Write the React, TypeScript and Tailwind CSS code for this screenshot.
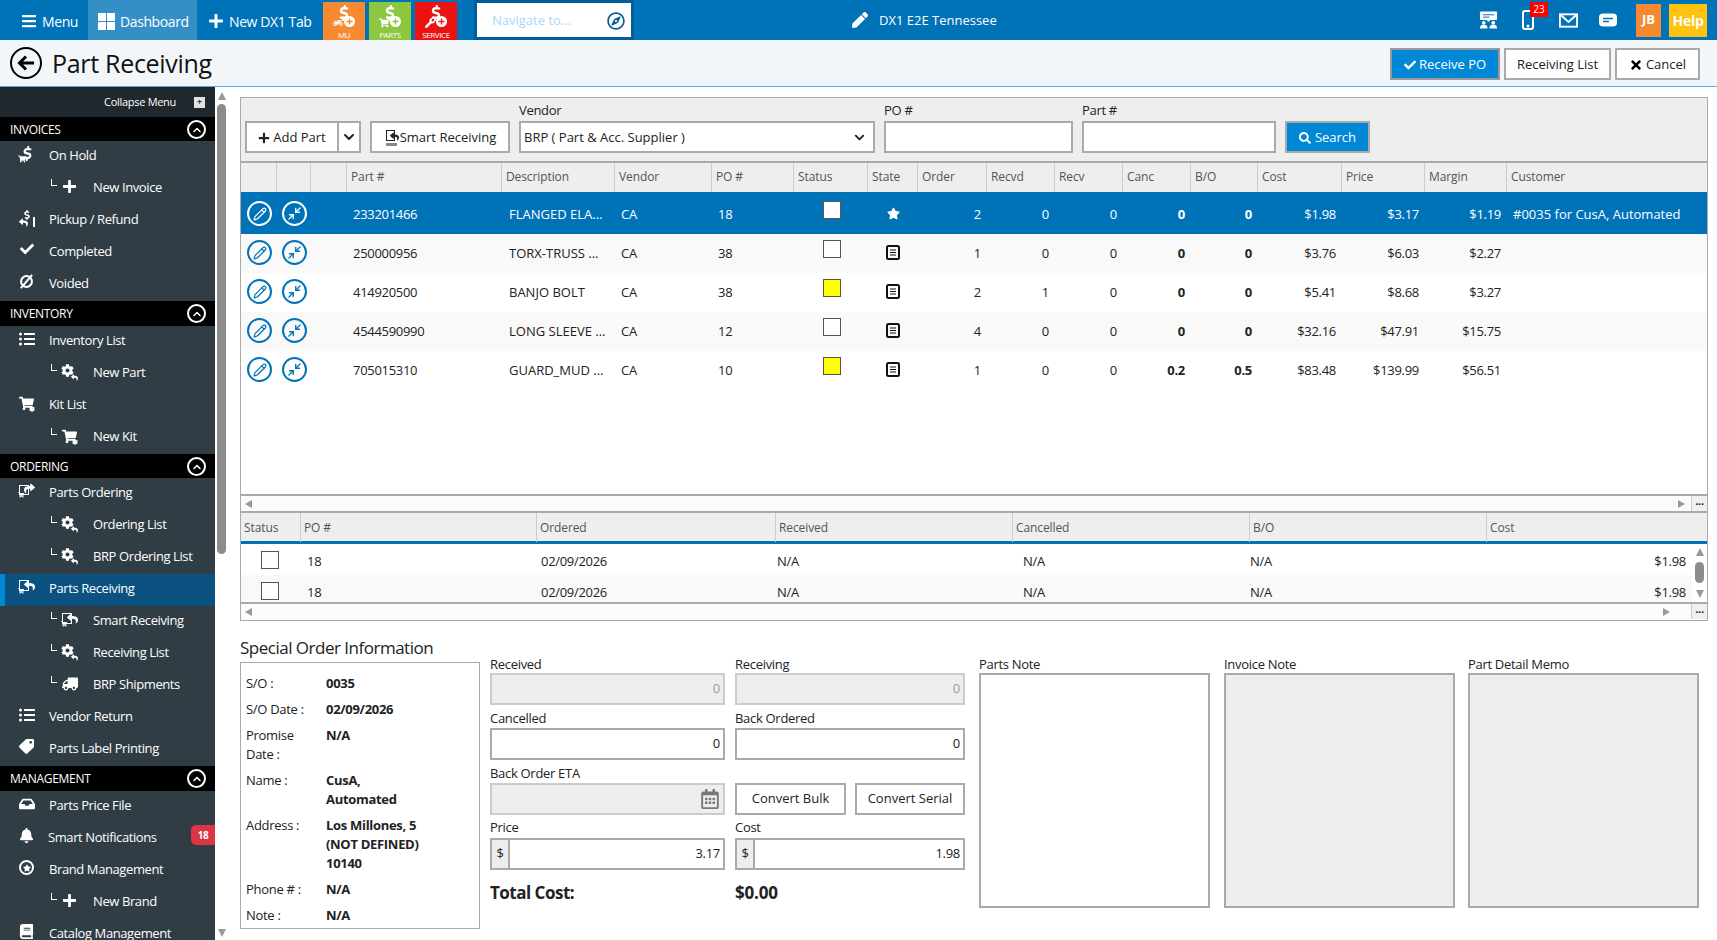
import { ReactNode } from "react"
import { ChevronDown, ChevronUp, Minimize2, Pencil } from "lucide-react"
import {
  FaBars, FaBell, FaBook, FaCheck, FaCog, FaDollarSign, FaListUl, FaPlus, FaRegCalendarAlt, FaRegCompass,
  FaReply, FaSearch, FaShare, FaShoppingCart, FaStar, FaTag, FaTimes, FaTruck, FaInbox, FaPen, FaWrench, FaMotorcycle,
} from "react-icons/fa"

const DollarCart = () => (
  <span className="relative block w-[17px] h-[17px]">
    <FaDollarSign className="absolute right-0 top-0 size-[15px] -skew-x-6" />
    <FaShoppingCart className="absolute left-0 bottom-0 size-[8px]" />
  </span>
)

const Refund = () => (
  <span className="relative block w-[16px] h-[17px]">
    <FaDollarSign className="absolute right-[3px] top-0 size-[10px]" />
    <FaReply className="absolute left-0 bottom-0 size-[9px]" />
    <span className="absolute right-0 bottom-0 w-[2px] h-[10px] bg-white" />
  </span>
)

const Voided = () => (
  <svg viewBox="0 0 16 16" className="size-[15px]" fill="none" stroke="currentColor" strokeWidth="2.2">
    <circle cx="8" cy="8" r="5.8" />
    <path d="M2 15 14 1" />
  </svg>
)

const Gear = () => (
  <span className="relative block w-[17px] h-[17px]">
    <FaCog className="absolute left-0 top-0 size-[13px]" />
    <FaReply className="absolute right-0 bottom-0 size-[7px]" />
  </span>
)

const CartBox = () => (
  <span className="relative block w-[16px] h-[17px]">
    <FaShoppingCart className="absolute left-0 top-[1px] size-[15px]" />
    <FaCog className="absolute right-0 bottom-0 size-[6px]" />
  </span>
)

const Ordering = () => (
  <span className="relative block w-[17px] h-[15px]">
    <span className="absolute left-[1px] top-[2px] w-[10px] h-[10px] border border-white" />
    <FaShare className="absolute right-0 top-0 size-[11px]" />
    <FaShoppingCart className="absolute left-0 bottom-0 size-[6px]" />
  </span>
)

const Receiving = () => (
  <span className="relative block w-[17px] h-[15px]">
    <span className="absolute left-[1px] top-[1px] w-[10px] h-[11px] border border-white" />
    <FaReply className="absolute right-0 top-[1px] size-[11px]" />
    <FaShoppingCart className="absolute left-0 bottom-0 size-[6px]" />
  </span>
)

const BrandRing = () => (
  <span className="flex items-center justify-center size-[15px] rounded-full border-2 border-white">
    <FaStar className="size-[8px]" />
  </span>
)

const CircleChevron = () => (
  <span className="flex items-center justify-center size-[19px] rounded-full border-2 border-white">
    <ChevronUp className="size-[12px]" strokeWidth={3} />
  </span>
)

type NavItem = { label: string; icon: ReactNode; sub?: boolean; active?: boolean; badge?: string; tight?: boolean }

const sections: { title: string; h: string; items: NavItem[] }[] = [
  {
    title: "INVOICES",
    h: "h-[24px] pt-[1px]",
    items: [
      { label: "On Hold", icon: <DollarCart /> },
      { label: "New Invoice", icon: <FaPlus className="size-[15px]" />, sub: true },
      { label: "Pickup / Refund", icon: <Refund /> },
      { label: "Completed", icon: <FaCheck className="size-[14px]" /> },
      { label: "Voided", icon: <Voided /> },
    ],
  },
  {
    title: "INVENTORY",
    h: "h-[25px]",
    items: [
      { label: "Inventory List", icon: <FaListUl className="size-[16px]" /> },
      { label: "New Part", icon: <Gear />, sub: true },
      { label: "Kit List", icon: <CartBox /> },
      { label: "New Kit", icon: <CartBox />, sub: true },
    ],
  },
  {
    title: "ORDERING",
    h: "h-[24px] pt-[1px]",
    items: [
      { label: "Parts Ordering", icon: <Ordering /> },
      { label: "Ordering List", icon: <Gear />, sub: true },
      { label: "BRP Ordering List", icon: <Gear />, sub: true },
      { label: "Parts Receiving", icon: <Receiving />, active: true },
      { label: "Smart Receiving", icon: <Receiving />, sub: true },
      { label: "Receiving List", icon: <Gear />, sub: true },
      { label: "BRP Shipments", icon: <FaTruck className="size-[16px] -scale-x-100" />, sub: true },
      { label: "Vendor Return", icon: <FaListUl className="size-[16px]" /> },
      { label: "Parts Label Printing", icon: <FaTag className="size-[15px] -scale-x-100" /> },
    ],
  },
  {
    title: "MANAGEMENT",
    h: "h-[25px]",
    items: [
      { label: "Parts Price File", icon: <FaInbox className="size-[16px]" /> },
      { label: "Smart Notifications", icon: <FaBell className="size-[15px]" />, badge: "18", tight: true },
      { label: "Brand Management", icon: <BrandRing /> },
      { label: "New Brand", icon: <FaPlus className="size-[15px]" />, sub: true },
      { label: "Catalog Management", icon: <FaBook className="size-[15px]" /> },
    ],
  },
]

function SideRow({ item }: { item: NavItem }) {
  const base = "flex items-start h-[32px] pt-[4px] text-[13px] leading-[20px] tracking-[-0.4px] text-white shrink-0"
  if (item.sub) {
    return (
      <div className={`${base} pl-[51px]`}>
        <span className="mt-[2px] w-[6px] h-[7px] border-l border-b border-white shrink-0" />
        <span className="ml-[4px] w-[17px] mt-[2px] flex justify-center shrink-0">{item.icon}</span>
        <span className="ml-[15px]">{item.label}</span>
      </div>
    )
  }
  return (
    <div className={`${base} ${item.active ? "bg-[#0c5280] border-l-[5px] border-[#0088d6] pl-[13px]" : "pl-[18px]"}`}>
      <span className="w-[17px] mt-[1px] flex justify-center shrink-0">{item.icon}</span>
      <span className={item.tight ? "ml-[13px]" : "ml-[14px]"}>{item.label}</span>
      {item.badge && (
        <span className="ml-auto w-[24px] h-[20px] mt-[-2px] rounded-l-[5px] bg-[#dc3545] text-[10px] font-bold flex items-center justify-center">
          {item.badge}
        </span>
      )}
    </div>
  )
}

function Sidebar() {
  return (
    <aside className="w-[215px] shrink-0 h-full overflow-hidden bg-[#303d45] flex flex-col">
      <div className="h-[30px] shrink-0 bg-[#20282e] flex items-center justify-end pr-[10px] text-white text-[11px]">
        <span>Collapse Menu</span>
        <span className="ml-[18px] w-[11px] h-[11px] bg-[#dfe3e6] flex items-center justify-center text-[#20282e] text-[8px] font-bold">+</span>
      </div>
      {sections.map((s) => (
        <div key={s.title} className="flex flex-col shrink-0">
          <div className={`${s.h} bg-black text-white text-[12px] pl-[10px] pr-[9px] flex items-center justify-between`}>
            <span>{s.title}</span>
            <CircleChevron />
          </div>
          {s.items.map((it) => <SideRow key={it.label} item={it} />)}
        </div>
      ))}
    </aside>
  )
}

const Triangle = ({ dir, className }: { dir: "up" | "down" | "left" | "right"; className?: string }) => {
  const pts = { up: "5,1 9,9 1,9", down: "1,1 9,1 5,9", left: "9,1 9,9 2,5", right: "1,1 1,9 8,5" }[dir]
  return (
    <svg viewBox="0 0 10 10" className={`size-[10px] shrink-0 ${className ?? ""}`} fill="#999">
      <polygon points={pts} />
    </svg>
  )
}

function HScroll({ rightPad }: { rightPad: string }) {
  return (
    <div className="h-[15px] shrink-0 bg-[#fbfbfb] flex items-center">
      <Triangle dir="left" className="ml-[2px]" />
      <div className="flex-1" />
      <Triangle dir="right" className={rightPad} />
      <div className="w-[16px] h-full bg-[#f0f0f0] border-l border-[#ccc] flex items-center justify-center text-[#222] text-[11px] font-bold leading-none pb-[6px]">...</div>
    </div>
  )
}

const partCols = "grid grid-cols-[36px_34px_36px_155px_113px_97px_82px_74px_50px_69px_68px_68px_68px_67px_84px_83px_82px_200px]"
const partHeads = ["", "", "", "Part #", "Description", "Vendor", "PO #", "Status", "State", "Order", "Recvd", "Recv", "Canc", "B/O", "Cost", "Price", "Margin", "Customer"]

const parts = [
  { no: "233201466", desc: "FLANGED ELA...", po: "18", box: "white", star: true, order: "2", recvd: "0", canc: "0", bo: "0", cost: "$1.98", price: "$3.17", margin: "$1.19", cust: "#0035 for CusA, Automated" },
  { no: "250000956", desc: "TORX-TRUSS ...", po: "38", box: "none", order: "1", recvd: "0", canc: "0", bo: "0", cost: "$3.76", price: "$6.03", margin: "$2.27", cust: "" },
  { no: "414920500", desc: "BANJO BOLT", po: "38", box: "yellow", order: "2", recvd: "1", canc: "0", bo: "0", cost: "$5.41", price: "$8.68", margin: "$3.27", cust: "" },
  { no: "4544590990", desc: "LONG SLEEVE ...", po: "12", box: "none", order: "4", recvd: "0", canc: "0", bo: "0", cost: "$32.16", price: "$47.91", margin: "$15.75", cust: "" },
  { no: "705015310", desc: "GUARD_MUD ...", po: "10", box: "yellow", order: "1", recvd: "0", canc: "0.2", bo: "0.5", cost: "$83.48", price: "$139.99", margin: "$56.51", cust: "" },
]

const StateDoc = () => (
  <svg viewBox="0 0 14 15" className="w-[14px] h-[15px]" fill="none">
    <rect x="1" y="1" width="12" height="13" rx="1.5" stroke="#111" strokeWidth="2" />
    <path d="M4 5h6M4 7.5h6M4 10h6" stroke="#111" strokeWidth="1.2" />
  </svg>
)

function RoundIcon({ selected, children }: { selected: boolean; children: ReactNode }) {
  return (
    <span className={`size-[25px] rounded-full border-2 flex items-center justify-center ${selected ? "border-white text-white" : "border-[#0072b8] text-[#0072b8]"}`}>
      {children}
    </span>
  )
}

function PartRow({ p, i }: { p: (typeof parts)[number]; i: number }) {
  const selected = i === 0
  const rowBg = selected ? "bg-[#0072b8] text-white h-[42px] pt-[9px]" : i % 2 === 1 ? "bg-[#f9f9f9] text-[#222] h-[39px] pt-[6px]" : "bg-white text-[#222] h-[39px] pt-[6px]"
  const cell = "pt-[3px] leading-[20px] whitespace-nowrap"
  const num = `${cell} text-right pr-[6px]`
  const box = p.box === "yellow" ? "bg-[#ffff00]" : "bg-white"
  return (
    <div className={`${partCols} ${rowBg} text-[13px]`}>
      <div className="pl-[6px]"><RoundIcon selected={selected}><Pencil className="size-[14px]" strokeWidth={2} /></RoundIcon></div>
      <div className="pl-[5px]"><RoundIcon selected={selected}><Minimize2 className="size-[15px]" strokeWidth={2.2} /></RoundIcon></div>
      <div />
      <div className={`${cell} pl-[6px]`}>{p.no}</div>
      <div className={`${cell} pl-[7px] tracking-normal`}>{p.desc}</div>
      <div className={`${cell} pl-[6px]`}>CA</div>
      <div className={`${cell} pl-[6px]`}>{p.po}</div>
      <div className="pl-[29px]"><div className={`size-[18px] border border-[#555] ${box}`} /></div>
      <div className="flex justify-center pt-[4px]">
        {p.star ? <FaStar className="size-[13px] mt-[2px] text-white" /> : <span className="mt-[1px]"><StateDoc /></span>}
      </div>
      <div className={num}>{p.order}</div>
      <div className={num}>{p.recvd}</div>
      <div className={num}>0</div>
      <div className={`${num} font-bold`}>{p.canc}</div>
      <div className={`${num} font-bold`}>{p.bo}</div>
      <div className={num}>{p.cost}</div>
      <div className={num}>{p.price}</div>
      <div className={num}>{p.margin}</div>
      <div className={`${cell} pl-[6px] tracking-normal`}>{p.cust}</div>
    </div>
  )
}

const poCols = "grid grid-cols-[60px_236px_239px_237px_237px_237px_205px]"
const poHeads = ["Status", "PO #", "Ordered", "Received", "Cancelled", "B/O", "Cost"]

function PoRow({ h, bg, top }: { h: string; bg: string; top: string }) {
  return (
    <div className={`${poCols} ${h} ${bg} ${top} text-[13px] leading-[20px] text-[#222]`}>
      <div className="pl-[20px]"><div className="size-[18px] border border-[#555] bg-white" /></div>
      <div className="pl-[6px]">18</div>
      <div className="pl-[4px]">02/09/2026</div>
      <div className="pl-[1px]">N/A</div>
      <div className="pl-[10px]">N/A</div>
      <div>N/A</div>
      <div className="text-right pr-[6px]">$1.98</div>
    </div>
  )
}

const btn = "h-[32px] border-2 border-[#aaa] bg-white flex items-center justify-center text-[13px] tracking-normal text-[#222]"
const fieldLabel = "h-[23px] flex items-end leading-[20px] text-[13px] text-[#222]"

const Receiving2 = () => (
  <span className="relative block w-[15px] h-[16px] text-[#222]">
    <span className="absolute left-[2px] top-0 w-[9px] h-[11px] border border-[#222]" />
    <FaReply className="absolute right-0 top-[2px] size-[9px]" />
    <span className="absolute left-[2px] bottom-0 w-[11px] h-[3px] bg-[#888]" />
  </span>
)

function Toolbar() {
  return (
    <div className="h-[63px] shrink-0 bg-[#eee] flex items-end gap-[9px] pl-[4px] pb-[8px]">
      <div className="w-[116px] h-[32px] border-2 border-[#aaa] bg-white flex text-[13px] tracking-normal text-[#222]">
        <div className="flex-1 flex items-center justify-center gap-[3px] border-r-2 border-[#aaa] pt-[1px]"><FaPlus className="size-[12px]" />Add Part</div>
        <div className="w-[20px] flex items-center justify-center"><ChevronDown className="size-[16px]" strokeWidth={3} /></div>
      </div>
      <div className={`${btn} w-[140px] gap-[1px] pt-[1px]`}><Receiving2 />Smart Receiving</div>
      <div className="w-[356px]">
        <div className="text-[13px] leading-[20px] text-[#222]">Vendor</div>
        <div className="mt-[1px] h-[32px] border-2 border-[#aaa] bg-white flex items-center justify-between pl-[3px] pr-[6px] pt-[1px] text-[13px] tracking-normal text-[#222]">
          BRP ( Part &amp; Acc. Supplier )
          <ChevronDown className="size-[15px]" strokeWidth={3} />
        </div>
      </div>
      <div className="w-[189px]">
        <div className="text-[13px] leading-[20px] text-[#222] mb-[1px]">PO #</div>
        <div className="h-[32px] border-2 border-[#aaa] bg-white" />
      </div>
      <div className="w-[194px]">
        <div className="text-[13px] leading-[20px] text-[#222] mb-[1px]">Part #</div>
        <div className="h-[32px] border-2 border-[#aaa] bg-white" />
      </div>
      <div className="w-[85px] h-[32px] border-2 border-[#aaa] bg-[#0088d6] text-white text-[13px] tracking-normal pt-[1px] flex items-center justify-center gap-[4px]">
        <FaSearch className="size-[12px]" />Search
      </div>
    </div>
  )
}

function Grids() {
  return (
    <div className="border border-[#aaa] w-[1468px] h-[524px] flex flex-col shrink-0">
      <Toolbar />
      <div className={`${partCols} h-[31px] shrink-0 bg-[#eee] border-t-2 border-[#aaa] text-[12px] tracking-[-0.1px] text-[#555]`}>
        {partHeads.map((h, i) => (
          <div key={i} className={`pl-[4px] leading-[28px] ${i < partHeads.length - 1 ? "border-r border-[#ccc]" : ""}`}>{h}</div>
        ))}
      </div>
      <div className="h-[302px] shrink-0 bg-white">
        {parts.map((p, i) => <PartRow key={p.no} p={p} i={i} />)}
      </div>
      <div className="border-y-2 border-[#aaa] shrink-0"><HScroll rightPad="mr-[4px]" /></div>
      <div className={`${poCols} pr-[15px] h-[31px] shrink-0 bg-[#eee] border-b-[3px] border-[#0072b8] text-[12px] tracking-[-0.1px] text-[#555] box-border w-full`}>
        {poHeads.map((h, i) => (
          <div key={h} className={`pl-[3px] leading-[29px] ${i < poHeads.length - 1 ? "border-r border-[#ccc]" : ""}`}>{h}</div>
        ))}
      </div>
      <div className="flex h-[58px] shrink-0">
        <div className="flex-1">
          <PoRow h="h-[31px]" bg="bg-white" top="pt-[7px]" />
          <PoRow h="h-[27px]" bg="bg-[#f9f9f9]" top="pt-[7px]" />
        </div>
        <div className="w-[15px] bg-white flex flex-col items-center pt-[3px]">
          <Triangle dir="up" />
          <div className="w-[9px] h-[21px] mt-[5px] rounded-full bg-[#8c8c8c]" />
          <Triangle dir="down" className="mt-[6px]" />
        </div>
      </div>
      <div className="border-t-2 border-[#aaa] shrink-0"><HScroll rightPad="mr-[19px]" /></div>
    </div>
  )
}

const soRows: { label: string[]; value: string[] }[] = [
  { label: ["S/O :"], value: ["0035"] },
  { label: ["S/O Date :"], value: ["02/09/2026"] },
  { label: ["Promise", "Date :"], value: ["N/A"] },
  { label: ["Name :"], value: ["CusA,", "Automated"] },
  { label: ["Address :"], value: ["Los Millones, 5", "(NOT DEFINED)", "10140"] },
  { label: ["Phone # :"], value: ["N/A"] },
  { label: ["Note :"], value: ["N/A"] },
]

function SpecialOrder() {
  return (
    <div className="w-[240px] shrink-0 pt-[15px]">
      <div className="text-[17px] leading-[24px] tracking-[-0.5px] text-[#222] mb-[2px]">Special Order Information</div>
      <div className="h-[267px] border border-[#aaa] pt-[11px] pl-[5px] flex flex-col gap-[7px]">
        {soRows.map((r) => (
          <div key={r.label[0]} className="flex text-[13px] leading-[19px] text-[#222]">
            <div className="w-[80px] shrink-0">{r.label.map((l) => <div key={l}>{l}</div>)}</div>
            <div className="font-bold">{r.value.map((l) => <div key={l}>{l}</div>)}</div>
          </div>
        ))}
      </div>
    </div>
  )
}

function NumBox({ value, disabled }: { value: string; disabled?: boolean }) {
  return (
    <div className={`h-[32px] border-2 flex items-center justify-end pr-[3px] text-[13px] ${disabled ? "border-[#ccc] bg-[#eee] text-[#999]" : "border-[#aaa] bg-white text-[#222]"}`}>
      {value}
    </div>
  )
}

function MoneyBox({ value }: { value: string }) {
  return (
    <div className="h-[32px] border-2 border-[#aaa] bg-white flex text-[13px] text-[#222]">
      <div className="w-[18px] bg-[#eee] border-r-2 border-[#aaa] flex items-center justify-center">$</div>
      <div className="flex-1 flex items-center justify-end pr-[3px]">{value}</div>
    </div>
  )
}

function CostForm() {
  return (
    <div className="ml-[10px] w-[475px] shrink-0 pt-[29px] grid grid-cols-[235px_230px] gap-x-[10px] content-start">
      <div><div className={`${fieldLabel} translate-y-[1px]`}>Received</div><NumBox value="0" disabled /></div>
      <div><div className={`${fieldLabel} translate-y-[1px]`}>Receiving</div><NumBox value="0" disabled /></div>
      <div><div className={fieldLabel}>Cancelled</div><NumBox value="0" /></div>
      <div><div className={fieldLabel}>Back Ordered</div><NumBox value="0" /></div>
      <div>
        <div className={fieldLabel}>Back Order ETA</div>
        <div className="h-[32px] border-2 border-[#ccc] bg-[#eee] flex items-center justify-end pr-[3px] text-[#777]">
          <FaRegCalendarAlt className="size-[20px]" />
        </div>
      </div>
      <div className="pt-[23px] flex gap-[9px]">
        <div className={`${btn} w-[111px]`}>Convert Bulk</div>
        <div className={`${btn} w-[110px]`}>Convert Serial</div>
      </div>
      <div><div className={`${fieldLabel} -translate-y-[1px]`}>Price</div><MoneyBox value="3.17" /></div>
      <div><div className={`${fieldLabel} -translate-y-[1px]`}>Cost</div><MoneyBox value="1.98" /></div>
      <div className="pt-[11px] text-[17px] leading-[24px] tracking-[-0.5px] font-bold text-[#222]">Total Cost:</div>
      <div className="pt-[11px] text-[17px] leading-[24px] tracking-[-0.2px] font-bold text-[#222]">$0.00</div>
    </div>
  )
}

function NoteBox({ label, bg, className }: { label: string; bg: string; className?: string }) {
  return (
    <div className={`w-[231px] shrink-0 ${className ?? ""}`}>
      <div className={`${fieldLabel} translate-y-[1px]`}>{label}</div>
      <div className={`h-[235px] border-2 border-[#aaa] ${bg}`} />
    </div>
  )
}

const TopIcon = ({ children, className }: { children: ReactNode; className?: string }) => (
  <span className={`flex items-center justify-center text-white ${className ?? ""}`}>{children}</span>
)

function Tile({ bg, color, name, glyph }: { bg: string; color: string; name: string; glyph: ReactNode }) {
  return (
    <div className={`w-[42px] h-[38px] mt-[2px] ${bg} flex flex-col items-center text-white`}>
      <div className="relative w-[28px] h-[26px] mt-[2px]">
        <FaDollarSign className="absolute left-[6px] top-[1px] size-[16px] -skew-x-6" />
        <span className="absolute left-[3px] bottom-[2px]">{glyph}</span>
        <span className="absolute right-[3px] bottom-[3px] size-[11px] rounded-full bg-white flex items-center justify-center">
          <FaPlus className={`size-[7px] ${color}`} />
        </span>
      </div>
      <div className="text-[8px] leading-[9px]">{name}</div>
    </div>
  )
}

function TopBar() {
  return (
    <header className="h-[40px] shrink-0 bg-[#0072b8] flex items-stretch text-white text-[14px] tracking-[-0.4px]">
      <div className="flex items-center pl-[21px] pt-[2px] w-[88px] gap-[5px]"><FaBars className="size-[16px]" />Menu</div>
      <div className="w-[109px] bg-[#338fc6] flex items-center pl-[10px] pt-[2px] gap-[5px]">
        <span className="grid grid-cols-2 gap-[1px] size-[17px]">
          <span className="bg-white" /><span className="bg-white" /><span className="bg-white" /><span className="bg-white" />
        </span>
        Dashboard
      </div>
      <div className="flex items-center pl-[11px] pt-[2px] w-[126px] gap-[5px]"><FaPlus className="size-[16px]" />New DX1 Tab</div>
      <div className="flex gap-[4px]">
        <Tile bg="bg-[#f58a32]" color="text-[#f58a32]" name="MU" glyph={<FaMotorcycle className="size-[10px]" />} />
        <Tile bg="bg-[#8dc63f]" color="text-[#8dc63f]" name="PARTS" glyph={<FaShoppingCart className="size-[10px]" />} />
        <Tile bg="bg-[#ee1111]" color="text-[#ee1111]" name="SERVICE" glyph={<FaWrench className="size-[10px]" />} />
      </div>
      <div className="ml-[17px] w-[160px] bg-[#005e98] p-[3px]">
        <div className="h-[34px] bg-white flex items-center justify-between pl-[15px] pr-[6px] pt-[1px] text-[#a8d8f5] text-[13px] tracking-normal">
          Navigate to...
          <FaRegCompass className="size-[18px] text-[#0a5f96]" />
        </div>
      </div>
      <div className="ml-[218px] flex items-center">
        <FaPen className="size-[16px]" />
        <span className="ml-[11px] text-[13px] tracking-normal pt-[1px]">DX1 E2E Tennessee</span>
      </div>
      <div className="ml-auto pr-[10px] flex items-center tracking-normal">
        <TopIcon className="w-[19px]">
          <svg viewBox="0 0 20 20" className="size-[20px]" fill="currentColor">
            <rect x="1" y="1" width="18" height="9" rx="1" />
            <path d="M8 10h4l-2 2z" />
            <rect x="4" y="4" width="12" height="1" fill="#0072b8" />
            <rect x="4" y="6.5" width="7" height="1" fill="#0072b8" />
            <circle cx="5" cy="13" r="2" />
            <circle cx="15" cy="13" r="2" />
            <path d="M1 19c0-3 1-4 4-4s4 1 4 4zM11 19c0-3 1-4 4-4s4 1 4 4z" />
          </svg>
        </TopIcon>
        <div className="relative ml-[24px] w-[12px]">
          <svg viewBox="0 0 12 20" className="w-[12px] h-[20px]" fill="none" stroke="currentColor" strokeWidth="2">
            <rect x="1" y="1" width="10" height="18" rx="2" />
            <circle cx="6" cy="16" r="0.6" />
          </svg>
          <span className="absolute left-[8px] -top-[8px] w-[18px] h-[15px] bg-[#ff0000] text-[10px] leading-[15px] text-center">23</span>
        </div>
        <TopIcon className="ml-[25px] w-[19px]">
          <svg viewBox="0 0 20 15" className="w-[19px] h-[15px]" fill="none" stroke="currentColor" strokeWidth="2">
            <rect x="1" y="1" width="18" height="13" />
            <path d="M1 1l9 8 9-8" />
          </svg>
        </TopIcon>
        <TopIcon className="ml-[21px] w-[18px]">
          <svg viewBox="0 0 18 13" className="w-[19px] h-[14px]">
            <rect width="18" height="13" rx="4" fill="currentColor" />
            <path d="M4 5h10M4 8h6" stroke="#0072b8" strokeWidth="1.3" />
          </svg>
        </TopIcon>
        <div className="ml-[19px] w-[25px] h-[33px] bg-[#f58a32] flex items-center justify-center font-bold text-[13px]">JB</div>
        <div className="ml-[8px] w-[38px] h-[33px] bg-[#ffc20e] flex items-center justify-center font-bold text-[14px] tracking-[-0.3px]">Help</div>
      </div>
    </header>
  )
}

function SubHeader() {
  return (
    <div className="h-[47px] shrink-0 bg-[#f2f6f9] border-b border-[#4daee8] flex items-center pr-[17px]">
      <span className="ml-[10px] size-[32px] rounded-full border-2 border-black flex items-center justify-center">
        <svg viewBox="0 0 20 20" className="size-[20px]" fill="none" stroke="black" strokeWidth="3">
          <path d="M18 10H4M10 3.5 3.5 10 10 16.5" />
        </svg>
      </span>
      <span className="ml-[10px] text-[25px] leading-none text-[#111]">Part Receiving</span>
      <div className="ml-auto flex gap-[4px] text-[13px] tracking-normal pt-[1px]">
        <div className="w-[110px] h-[32px] border-2 border-[#999] bg-[#0088d6] text-white pt-[2px] flex items-center justify-center gap-[3px]"><FaCheck className="size-[12px]" />Receive PO</div>
        <div className="w-[107px] h-[32px] border-2 border-[#aaa] bg-white text-[#222] pt-[2px] flex items-center justify-center">Receiving List</div>
        <div className="w-[85px] h-[32px] border-2 border-[#aaa] bg-white text-[#222] pt-[2px] flex items-center justify-center gap-[3px]"><FaTimes className="size-[14px] text-black" />Cancel</div>
      </div>
    </div>
  )
}

export default function App() {
  return (
    <div className="w-[1717px] h-[940px] overflow-hidden flex flex-col bg-white font-['Open_Sans','Noto_Sans',sans-serif] tracking-[-0.3px]">
      <TopBar />
      <SubHeader />
      <div className="flex-1 min-h-0 flex">
        <Sidebar />
        <div className="w-[17px] shrink-0 bg-white flex flex-col items-center pt-[4px] pr-[4px]">
          <Triangle dir="up" />
          <div className="w-[9px] h-[450px] mt-[3px] rounded-full bg-[#8c8c8c]" />
          <div className="flex-1" />
          <Triangle dir="down" className="mb-[2px]" />
        </div>
        <main className="flex-1 min-w-0 pl-[8px] pt-[10px]">
          <Grids />
          <div className="flex">
            <SpecialOrder />
            <CostForm />
            <div className="ml-[14px] pt-[29px] flex">
              <NoteBox label="Parts Note" bg="bg-white" />
              <NoteBox label="Invoice Note" bg="bg-[#eee]" className="ml-[14px]" />
              <NoteBox label="Part Detail Memo" bg="bg-[#eee]" className="ml-[13px]" />
            </div>
          </div>
        </main>
      </div>
    </div>
  )
}
